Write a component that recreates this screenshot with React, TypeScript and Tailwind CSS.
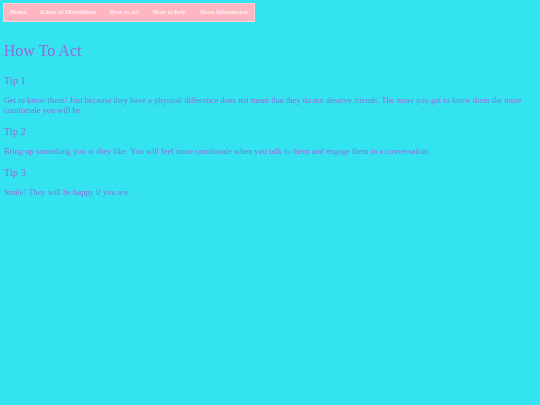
import React from "react";

export default function App() {
  const links = ["Home", "Kinds of Disabilities", "How to act", "How to help", "More Information"];
  return (
    <div className="min-h-[405px] w-full bg-[#33e4f0] p-[3px] text-[#9370db]" style={{ fontFamily: '"Liberation Serif", "Times New Roman", serif' }}>
      <nav className="flex h-[19px] w-fit items-center border border-[#ffd0d8] bg-[#ffb6c1] px-[6px]">
        {links.map((l) => (
          <span key={l} className="px-[7px] text-[6.7px] leading-none text-white first:pl-0 last:pr-0">
            {l}
          </span>
        ))}
      </nav>
      <div className="px-px">
        <h1 className="mt-[20px] text-[16px] leading-[18px]">How To Act</h1>
        <h2 className="mt-[15px] text-[10.5px] leading-[12px]">Tip 1</h2>
        <p className="mt-[8px] text-[8.45px] leading-[10px]">
          Get to know them! Just because they have a physical difference does not mean that they do not deserve friends. The more you get to know them the more comfortale you will be.
        </p>
        <h2 className="mt-[11px] text-[10.5px] leading-[12px]">Tip 2</h2>
        <p className="mt-[8px] text-[8.45px] leading-[10px]">
          Bring up something you or they like. You will feel more comfortale when you talk to them and engage them in a conversation.
        </p>
        <h2 className="mt-[11px] text-[10.5px] leading-[12px]">Tip 3</h2>
        <p className="mt-[8px] text-[8.45px] leading-[10px]">Smile! They will be happy if you are.</p>
      </div>
    </div>
  );
}
